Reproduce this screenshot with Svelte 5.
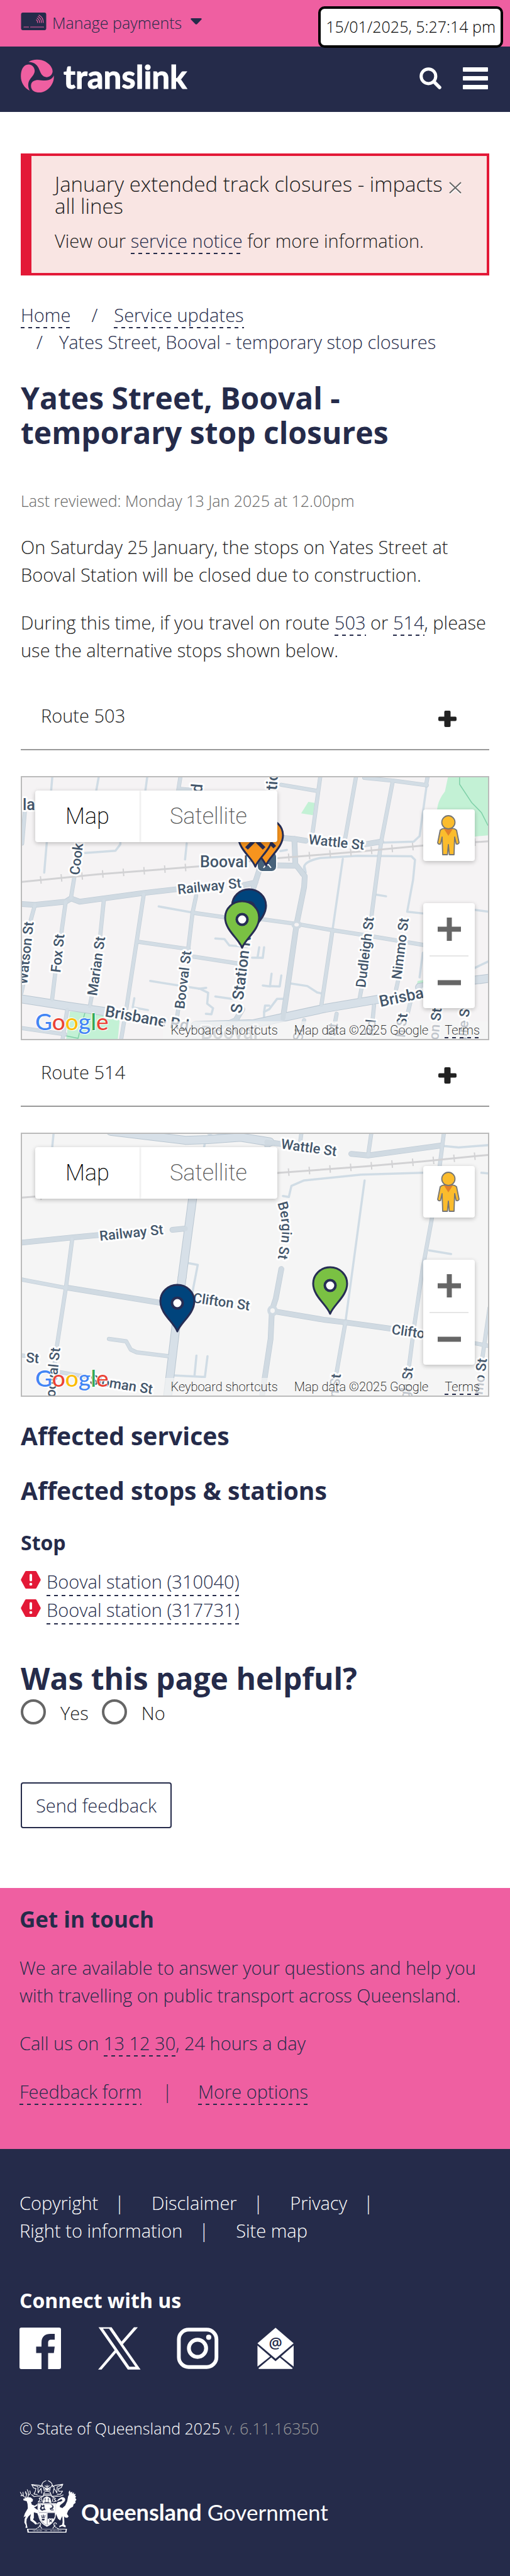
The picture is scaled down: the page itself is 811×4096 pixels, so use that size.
<script>
  const maps = [
    {
      id: 'm503',
      route: 'Route 503',
      land: '#f5f3f4',
      project: 'translate(-35 -16.5) scale(.5172 .2896)',
      parks: [
        'M1378 50L1505 50V375L1460 382L1345 275Q1338 200 1368 135Z',
        'M948 192L968 198L962 265L926 255Z',
        'M215 1342L370 1350L362 1500H203Z',
        'M1284 1175L1305 1170V1200L1282 1195Z'
      ],
      paths: ['M1413 50V95L1450 195L1480 250L1500 320', 'M262 1345L250 1420L240 1490L200 1475'],
      rail: 'M60 632L300 590L620 545L860 500L1100 465L1300 432L1505 408',
      thin: [
        'M161 50L136 580', 'M304 50L296 130', 'M453 50L447 130', 'M262 472L355 460L370 425V400', 'M574 420L569 508',
        'M488 766L600 802', 'M1054 505L1022 900', 'M1315 60L1290 380L1272 410L1180 415',
        'M935 560Q930 520 985 500L1100 488L1265 490L1276 510L1270 620L1252 795L1305 805',
        'M1153 700L1187 710', 'M662 942L690 945L705 980L760 988', 'M797 990L792 1045', 'M812 990L808 1048L775 1047',
        'M462 1175L615 1218L640 1240L637 1300L655 1325L650 1358L633 1355', 'M612 1218L634 1213',
        'M835 1135L830 1205L808 1200', 'M865 1145L860 1205L830 1203', 'M662 1260L720 1275',
        'M413 1270L408 1320L455 1335', 'M890 1188L945 1203L975 1238L990 1244', 'M875 1273H852L828 1330L812 1345V1390',
        'M828 1310H815L812 1345', 'M1505 1065L1440 1120', 'M1300 1020L1290 1155', 'M862 462L882 456', 'M1460 785L1505 795',
        'M936 545L940 580L925 590'
      ],
      mid: [
        'M555 50L548 130', 'M550 120L600 128', 'M985 50L960 375', 'M1095 50L1060 405', 'M1208 75L1172 410L1142 820', 'M1315 50L1310 100',
        'M1120 60L1208 75L1312 100', 'M865 98L977 132', 'M77 230L68 420', 'M229 600L218 720', 'M107 760L90 870',
        'M202 740L188 920', 'M319 735L308 930', 'M442 700L420 960L390 1310L372 1500', 'M603 708L592 800L578 1010',
        'M592 800L700 828', 'M800 835L912 862L1025 897L1110 920L1305 978', 'M425 960L580 1000', 'M590 1040L735 1080',
        'M1022 900L988 1310', 'M170 1130L160 1280', 'M283 1250L276 1315', 'M548 1330L542 1400', 'M1112 1210L1106 1270',
        'M1225 1165L1218 1220', 'M60 1432L200 1468', 'M207 1330L192 1500', 'M1150 1310L1145 1400', 'M1035 1355L1020 1500',
        'M935 1390L920 1500', 'M1262 1290L1250 1380', 'M72 1190L66 1240'
      ],
      wide: [
        'M60 752L107 757L202 740L218 722L245 740L442 692L540 672', 'M750 648L785 635', 'M800 550L780 660',
        'M872 390L905 395L940 405', 'M905 395L908 530', 'M850 540L912 542L937 600L935 660L912 862L885 1200L870 1380',
        'M1120 425L1172 410', 'M745 1330L725 1390L700 1410'
      ],
      arterial: ['M60 1272L215 1315L330 1345', 'M600 1420L780 1410L1000 1325L1180 1270', 'M1290 1210L1505 1160'],
      spot: [912, 866],
      labels: [
        { t: 'Wattle St', x: 455, y: 106, r: 6 },
        { t: 'Railway St', x: 248, y: 186, r: -6 },
        { t: 'Booval', x: 283, y: 143, r: 0, s: 25 },
        { t: 'Cook', x: 91, y: 156, r: -83 },
        { t: 'S Station Rd', x: 349, y: 376, r: -83, s: 25 },
        { t: 'tion', x: 405, y: 21, r: -85, s: 25 },
        { t: 'd', x: 286, y: 25, r: -85, s: 25 },
        { t: 'Booval St', x: 258, y: 369, r: -83 },
        { t: 'Marian St', x: 119, y: 348, r: -82 },
        { t: 'Fox St', x: 61, y: 311, r: -84 },
        { t: 'Watson St', x: 8, y: 330, r: -84 },
        { t: 'Dudleigh St', x: 546, y: 335, r: -83 },
        { t: 'Nimmo St', x: 603, y: 322, r: -83 },
        { t: 'Brisbane Rd', x: 131, y: 380, r: 10, s: 25 },
        { t: 'Brisbane Rd', x: 570, y: 365, r: -12, s: 25 },
        { t: 'Booval', x: 284, y: 416, r: 0, s: 30, f: '#8a939d' },
        { t: 'la', x: 1, y: 52, r: 0, s: 25 },
        { t: 'on St', x: 662, y: 418, r: -84 },
        { t: 'Claire St', x: 704, y: 444, r: -84 },
        { t: 'h St', x: 609, y: 414, r: -84 },
        { t: 'Rd', x: 560, y: 412, r: -84 },
        { t: 'St', x: 500, y: 412, r: -84 },
        { t: 'St', x: 446, y: 420, r: -84 }
      ],
      station: true,
      pins: [
        { x: 388, y: 141, c: '#f7941e', cross: true },
        { x: 371, y: 143, c: '#f7941e', cross: true },
        { x: 361, y: 253, c: '#00447c' },
        { x: 350, y: 272, c: '#7ac143' }
      ]
    },
    {
      id: 'm514',
      route: 'Route 514',
      land: '#f5f5f5',
      project: 'translate(-35 -149.5) scale(.5172 .3774)',
      parks: [],
      paths: [],
      rail: 'M60 665L300 640L860 560L1120 533L1300 512L1505 484',
      thin: [
        'M165 390L160 460', 'M630 435L627 455', 'M1121 592L1062 1190', 'M577 940L608 948L590 1075', 'M604 1330L598 1415',
        'M638 1333L630 1420L515 1412', 'M1320 887L1387 902', 'M870 658L888 662L896 615L935 592L1110 568L1300 560',
        'M1365 447L1410 453L1505 443', 'M1480 560L1505 563', 'M640 395L655 405L690 395'
      ],
      mid: [
        'M222 840L203 1040L175 1290', 'M60 1008L203 1045', 'M335 1260L388 1270L402 1305L420 1316L515 1332',
        'M927 390L922 440', 'M1142 390L1132 485', 'M1365 390L1352 530', 'M1328 750L1300 960L1272 1220L1258 1370',
        'M1062 1190L1035 1400', 'M1505 1130L1480 1370', 'M1460 1278L1505 1290', 'M60 1328L80 1332', 'M185 1400L260 1418', 'M170 1345L165 1390',
        'M1020 1490L1030 1440'
      ],
      wide: [
        'M60 855L225 832L320 820', 'M530 800L570 795', 'M203 1043L490 1107', 'M865 965L848 1090L836 1140L832 1260L805 1505',
        'M840 1143L1000 1180L1062 1190L1210 1218', 'M822 435V460', 'M820 430L870 440', 'M1080 480L1132 487L1355 445'
      ],
      arterial: ['M340 385L570 423L640 420L740 410L830 430', 'M592 670L560 1000', 'M560 1000L545 1160L515 1505'],
      spot: [838, 1141],
      curve: 'Bergin St',
      labels: [
        { t: 'Wattle St', x: 411, y: 23, r: 8 },
        { t: 'Railway St', x: 124, y: 170, r: -6 },
        { t: 'Clifton St', x: 271, y: 268, r: 8 },
        { t: 'Clifton St', x: 587, y: 318, r: 8 },
        { t: 'St', x: 6, y: 363, r: 4 },
        { t: 'Booval St', x: 51, y: 433, r: -84 },
        { t: 'Sloman St', x: 107, y: 398, r: 9 },
        { t: 'an St', x: 501, y: 432, r: -83 },
        { t: 'leigh St', x: 613, y: 445, r: -83 },
        { t: 'mmo St', x: 730, y: 434, r: -83 }
      ],
      station: false,
      pins: [
        { x: 490, y: 287, c: '#7ac143' },
        { x: 247, y: 315, c: '#00447c' }
      ]
    }
  ];
  const stops = ['Booval station (310040)', 'Booval station (317731)'];
  const legal = ['Copyright', 'Disclaimer', 'Privacy', 'Right to information', 'Site map'];
  const google = [['G', '#4285f4'], ['o', '#ea4335'], ['o', '#fbbc05'], ['g', '#4285f4'], ['l', '#34a853'], ['e', '#ea4335']];
</script>

<div class="page">
  <div class="topbar">
    <button class="payments" type="button">
      <svg class="card" viewBox="0 0 40 28" aria-hidden="true">
        <rect width="40" height="28" rx="3" fill="#252b4a" />
        <g fill="none" stroke="#ef5fa1" stroke-width="1.2" stroke-linecap="round">
          <path d="M4.5 23H12M15 23H36" />
          <path d="M24.5 11.5Q26.5 13 26.3 16M25.5 8.8Q29.5 11 29.3 16M27 6.3Q32.6 9.5 32.3 16M28.5 4Q35.6 8 35.3 16" />
        </g>
      </svg>
      <span>Manage payments</span>
      <svg class="caret" viewBox="0 0 18 10" aria-hidden="true"><path d="M1.5 0H16.5Q18.5 .5 17.4 2L10.4 9.2Q9 10.4 7.6 9.2L.6 2Q-.5 .5 1.5 0Z" fill="#252b4a" /></svg>
    </button>
    <div class="clock">15/01/2025, 5:27:14 pm</div>
  </div>

  <header class="nav">
    <a class="brand" href="#home">
      <svg viewBox="20 288 240 238" aria-hidden="true" fill="#ef5fa1">
        <path d="M78 308C108 287 160 286 195 305C230 325 250 355 246 380C240 407 215 418 195 413C165 405 160 375 148 350C135 324 112 308 78 308Z" />
        <path d="M86 509C48 490 24 452 24 408C24 365 40 325 78 325C105 325 122 350 121 372C119 400 95 415 82 440C72 460 74 488 86 509Z" />
        <path d="M255 402C259 440 240 480 205 505C175 525 140 527 115 513C95 500 91 475 98 458C106 440 125 434 145 434C175 436 215 445 240 424C250 415 253 410 255 402Z" />
      </svg>
      <span>translink</span>
    </a>
    <div class="tools">
      <button type="button" aria-label="Search">
        <svg width="35" height="35" viewBox="0 0 35 35"><circle cx="14.3" cy="14.3" r="11.6" fill="none" stroke="#fff" stroke-width="5" /><path d="M23.5 23.5L32 32" stroke="#fff" stroke-width="5.5" stroke-linecap="round" /></svg>
      </button>
      <button type="button" aria-label="Menu">
        <svg width="40" height="35" viewBox="0 0 40 35" fill="#fff"><rect width="40" height="7" rx="1" /><rect y="14" width="40" height="7" rx="1" /><rect y="28" width="40" height="7" rx="1" /></svg>
      </button>
    </div>
  </header>

  <main>
    <section class="alert">
      <div class="alert-head">
        <h2>January extended track closures - impacts all lines</h2>
        <button type="button" aria-label="Close">
          <svg width="20" height="20" viewBox="0 0 20 20"><path d="M1 3L19 20M19 3L1 20" stroke="#fff" stroke-width="2" /><path d="M1 1L19 18M19 1L1 18" stroke="#666" stroke-width="2" /></svg>
        </button>
      </div>
      <p>View our <a href="#notice">service notice</a> for more information.</p>
    </section>

    <ol class="crumbs">
      <li><a href="#home">Home</a></li>
      <li><a href="#updates">Service updates</a></li>
      <li>Yates Street, Booval - temporary stop closures</li>
    </ol>

    <h1>Yates Street, Booval - temporary stop closures</h1>
    <p class="reviewed">Last reviewed: Monday 13 Jan 2025 at 12.00pm</p>
    <p class="copy">On Saturday 25 January, the stops on Yates Street at Booval Station will be closed due to construction.</p>
    <p class="copy">During this time, if you travel on route <a href="#503">503</a> or <a href="#514">514</a>, please use the alternative stops shown below.</p>

    <div class="routes">
      {#each maps as m}
        <button class="route" type="button">
          <span>{m.route}</span>
          <svg width="29" height="26" viewBox="0 0 29 26" fill="#222"><rect x="9.5" width="10" height="26" rx="2" /><rect y="9.5" width="29" height="7" rx="2" /></svg>
        </button>
        <div class="map">
          <svg class="canvas" viewBox="0 0 741 416" preserveAspectRatio="xMidYMid slice" aria-hidden="true">
            <rect width="741" height="416" fill={m.land} />
            <g class="geo" transform={m.project}>
              {#each m.parks as d}<path {d} fill="#c3f1d5" stroke="none" />{/each}
              {#each m.paths as d}<path {d} stroke="#7fd0a8" stroke-width="1.5" />{/each}
              {#each m.thin as d}<path {d} stroke="#d0dce5" stroke-width="3.5" />{/each}
              {#each m.mid as d}<path {d} stroke="#c4cfd8" stroke-width="6.5" />{/each}
              {#each m.wide as d}<path {d} stroke="#c0ccd6" stroke-width="9" />{/each}
              {#each m.arterial as d}<path {d} stroke="#b9c6d1" stroke-width="14" />{/each}
              {#each m.arterial as d}<path {d} stroke="#d7e0e8" stroke-width="12" />{/each}
              {#each m.wide as d}<path {d} stroke="#d0dae2" stroke-width="7.5" />{/each}
              {#each m.mid as d}<path {d} stroke="#d3dde5" stroke-width="5" />{/each}
              <path d={m.rail} stroke="#d2d2d4" stroke-width="3" stroke-linecap="butt" />
              <path class="ties" d={m.rail} stroke="#d2d2d4" stroke-width="12" stroke-dasharray="2 31" />
            </g>
            <g transform={m.project}>
              <ellipse cx={m.spot[0]} cy={m.spot[1]} rx="16" ry="24" fill="#d0dae2" />
              <ellipse cx={m.spot[0]} cy={m.spot[1]} rx="7" ry="10" fill={m.land} />
            </g>
            {#if m.station}
              <rect x="374" y="118" width="31" height="32" rx="8" fill="#47627a" stroke="#fff" stroke-width="2" />
              <path d="M384 144l4-5h4l4 5" fill="none" stroke="#fff" stroke-width="2" />
            {/if}
            <g class="labels">
              {#each m.labels as l}
                <text transform="translate({l.x} {l.y}) rotate({l.r})" font-size={l.s ?? 22} fill={l.f ?? '#43566b'}>{l.t}</text>
              {/each}
              {#if m.curve}
                <path id="bend" d="M406 110Q419 150 409 184L404 216" fill="none" />
                <text font-size="22" fill="#43566b"><textPath href="#bend">{m.curve}</textPath></text>
              {/if}
            </g>
            {#each m.pins as p}
              <g transform="translate({p.x} {p.y})" stroke="#262d54">
                <path d="M0-1C-5-15-27-29-27-49A27 26 0 0 1 27-49C27-29 5-15 0-1Z" fill={p.c} stroke-width="3" stroke-linejoin="round" />
                {#if p.cross}
                  <path d="M-14-30L14-58M14-30L-14-58" stroke-width="6" />
                {:else}
                  <circle cy="-46" r="8.5" fill="#fff" stroke-width="4" />
                {/if}
              </g>
            {/each}
          </svg>
          <div class="types">
            <button type="button" class="on">Map</button>
            <button type="button">Satellite</button>
          </div>
          <button class="pegman" type="button" aria-label="Street View">
            <svg width="82" height="82" viewBox="0 0 82 82">
              <path d="M30 31Q40 28 50 31L53 33L57 53Q56 56 52.5 55L50 44L49 72H41.5L40 56L38.5 72H31L30 44L27.5 55Q24 56 23 53L27 33Z" fill="#fbbc2d" stroke="#757575" stroke-width="1.8" stroke-linejoin="round" />
              <path d="M33 31H47L40 42Z" fill="#e2802b" />
              <circle cx="40" cy="20.5" r="10.5" fill="#fbbc2d" stroke="#757575" stroke-width="1.8" />
            </svg>
          </button>
          <div class="zoom">
            <button type="button" aria-label="Zoom in"><svg width="37" height="37" viewBox="0 0 37 37"><path d="M18.5 0V37M0 18.5H37" stroke="#666" stroke-width="8" /></svg></button>
            <button type="button" aria-label="Zoom out"><svg width="37" height="37" viewBox="0 0 37 37"><path d="M0 18.5H37" stroke="#666" stroke-width="8" /></svg></button>
          </div>
          <div class="google">{#each google as [c, color]}<span style="color:{color}">{c}</span>{/each}</div>
          <div class="credits">
            <button type="button">Keyboard shortcuts</button>
            <span>Map data ©2025 Google</span>
            <span><a href="#terms">Terms</a></span>
          </div>
        </div>
      {/each}
    </div>

    <h2 class="services">Affected services</h2>
    <h2 class="stations">Affected stops &amp; stations</h2>
    <h3>Stop</h3>
    <ul class="stops">
      {#each stops as s}
        <li>
          <svg width="32" height="28" viewBox="0 0 32 28"><path d="M8.5 0H23.5Q24.5 0 25 1L31.5 13Q32 14 31.5 15L25 27Q24.5 28 23.5 28H8.5Q7.5 28 7 27L.5 15Q0 14 .5 13L7 1Q7.5 0 8.5 0Z" fill="#e31937" /><rect x="14" y="4.5" width="4" height="12" rx="2" fill="#fff" /><circle cx="16" cy="21" r="2.3" fill="#fff" /></svg>
          <a href="#stop">{s}</a>
        </li>
      {/each}
    </ul>

    <form class="helpful">
      <h2 id="helpful">Was this page helpful?</h2>
      <div class="choices" role="radiogroup" aria-labelledby="helpful">
        <label><input type="radio" name="helpful" /><span>Yes</span></label>
        <label><input type="radio" name="helpful" /><span>No</span></label>
      </div>
      <button class="send" type="button">Send feedback</button>
    </form>
  </main>

  <section class="contact">
    <h2>Get in touch</h2>
    <p>We are available to answer your questions and help you with travelling on public transport across Queensland.</p>
    <p>Call us on <a href="#call">13 12 30</a>, 24 hours a day</p>
    <ul>
      <li><a href="#feedback">Feedback form</a></li>
      <li><a href="#more">More options</a></li>
    </ul>
  </section>

  <footer>
    <ul class="legal">
      {#each legal as l}<li><a href="#legal">{l}</a></li>{/each}
    </ul>
    <h2>Connect with us</h2>
    <div class="social">
      <a href="#facebook" aria-label="Facebook"><svg viewBox="0 -1 68 68"><path fill-rule="evenodd" fill="#fff" d="M3 0H63Q66 0 66 3V63Q66 66 63 66H45.5V40.4H54.6L56 30.3H45.5V25C45.5 21 46.5 19.3 51 19.3H56V10H49C41 10 35 14 35 24V30.3H26.5V40.4H35V66H3Q0 66 0 63V3Q0 0 3 0Z" /></svg></a>
      <a href="#x" aria-label="X"><svg viewBox="43 46 296 298"><path fill-rule="evenodd" fill="#fff" d="M45 48H136L205 148L292 48H319L215 166L338 343H249L167 226L66 343H42L157 208ZM76 58L260 323H302L118 58Z" /></svg></a>
      <a href="#instagram" aria-label="Instagram"><svg viewBox="598 46 296 298"><rect x="612" y="65" width="262" height="260" rx="68" fill="none" stroke="#fff" stroke-width="26" /><circle cx="742" cy="195" r="60" fill="none" stroke="#fff" stroke-width="27" /><circle cx="820" cy="118" r="18" fill="#fff" /></svg></a>
      <a href="#email" aria-label="Email"><svg viewBox="1140 46 296 298"><g fill="#fff"><path d="M1280 52L1406 160L1280 267L1154 160Z" /><path d="M1154 175L1242 252L1154 322Z" /><path d="M1406 175L1318 252L1406 322Z" /><path d="M1250 258L1280 285L1310 258L1400 334L1394 339H1166L1160 334Z" /></g><text x="1280" y="193" text-anchor="middle" font-family="Open Sans, sans-serif" font-weight="600" font-size="104" fill="#252b4a">@</text></svg></a>
    </div>
    <p class="rights">© State of Queensland 2025 <span>v. 6.11.16350</span></p>
    <div class="gov">
      <svg viewBox="22 36 398 370" aria-hidden="true">
        <g fill="#fff">
          <path d="M48 168L76 156L100 158L116 172L113 186L102 190L108 208L128 215L146 203V214L132 224L122 226L150 246V254L158 262L155 290L146 268L122 262V300L116 312L136 328L146 342L132 346L120 334L98 318L96 298L102 274L84 290L72 310L70 330L74 352L78 370H64L66 352L56 332L58 306L66 290L56 292L50 298L60 268L80 234L78 204L72 184L50 178Z" />
          <path d="M372 108L376 124L390 118L388 132L400 122L400 136L412 132L408 148L416 150L410 162L418 174L410 184L412 196L398 206L394 222L376 232L360 250L352 272L364 290L354 300L340 298L332 290L334 330L333 346L344 356L342 366L318 358L298 366L300 354L318 348L322 330L320 288L312 302L306 318L290 306L276 272L270 262L276 246L276 206L288 190L312 186L322 176L312 170L290 182L282 182L294 168L314 156Q336 154 340 172Q340 186 322 198L304 212L302 224L320 232L340 214L354 184L360 150L366 140L364 120Z" />
          <path fill-rule="evenodd" d="M148 198H278V262L272 300Q256 344 213 362Q170 344 156 300L148 262ZM154 204V260H272V204ZM211 266H158V290Q174 336 211 352ZM217 266V352Q250 336 268 290V266Z" />
          <path d="M154 204H272V260H154ZM158 267H210V350Q174 332 158 290Z" />
          <path d="M218 308Q240 296 264 308Q250 336 218 350Z" />
          <path d="M182 196L190 162L212 150L236 162L244 196H234L224 190H200L192 196Z" />
          <path d="M74 376H136L148 366L140 378H288L280 366L296 376H352L348 402H78ZM84 381L87 397H341L344 381Z" fill-rule="evenodd" />
        </g>
        <g fill="#252b4a">
          <path d="M170 206q4 16 -6 28q2 14 18 16q16-4 16-16q-6-6-2-20q-8-10-12 2q-8-2-14-10zM178 222q10 2 14 12q-8 8-16 2z" fill-rule="evenodd" />
          <circle cx="186" cy="228" r="5" fill="#fff" /><circle cx="198" cy="242" r="5" />
          <path d="M228 210q20-6 22 12q-4 10-16 8q-4 12 8 18h18q-2-10-8-12q12-8 4-22q-10-10-28-4z" opacity=".9" />
          <circle cx="240" cy="222" r="4" fill="#fff" /><circle cx="248" cy="242" r="4" fill="#fff" />
          <path d="M172 278l6 6v10h6v-16h6v16h6v-10l6-6-4 22h-22zM176 306h22l-4 12h-14z" />
          <path d="M232 304l6-28 4-6 6 8 4 26z" />
          <path d="M229 312l18 18M247 312l-18 18" stroke="#252b4a" stroke-width="5" />
          <path d="M201 162v28M195 171h12M223 162v28M217 171h12" stroke="#252b4a" stroke-width="3" />
        </g>
        <g fill="none" stroke="#fff" stroke-width="5" stroke-linecap="round" stroke-linejoin="round">
          <path d="M66 158Q40 150 28 122M42 144L32 146M50 150L46 122M66 156Q76 140 64 116M80 156Q92 134 76 104M84 144L98 130L94 112M74 134L62 126" />
          <path d="M206 42Q180 50 178 70L160 88M178 70L190 92L194 112M222 42Q248 54 250 72L264 88M250 72L236 92L232 112" />
          <path d="M200 76L214 88L228 76M194 88L214 100L234 88M196 100H232M214 72V112M202 110L226 94M202 94L226 110" />
          <path d="M194 122Q214 108 236 122L240 134H190ZM188 144H242M192 134L186 148M240 134L246 148" />
          <path d="M180 84L160 74L106 68L120 92L136 96L132 116L122 134L146 138M112 72L150 82L152 126M152 126L172 94L176 128M106 138L124 152L150 148L188 150" />
          <path d="M250 84L270 74L324 66L312 90L292 98L296 116L322 114L306 136L284 136M316 72L284 84L282 126M282 126L262 94L256 128M326 140L304 150L280 148L246 150" />
          <path d="M184 152L158 164L166 172L152 190L172 188M246 152L272 164L264 172L278 184L258 188M172 156L180 186M258 156L250 186" />
          <path d="M150 368Q176 352 168 338Q156 330 148 342M278 368Q256 354 262 338Q274 330 280 342M160 350L176 372M270 350L254 372" />
        </g>
        <path d="M116 389H180M198 389H216M236 389H314" stroke="#fff" stroke-width="8" stroke-dasharray="4 3 6 4 2 4" opacity=".65" />
      </svg>
      <span><b>Queensland</b> Government</span>
    </div>
  </footer>
</div>

<style>
  :global(body) { background: #fff; }
  .page {
    position: relative;
    font-family: 'Open Sans', sans-serif;
    font-weight: 300;
    font-size: 29px;
    line-height: 1.5;
    color: #222;
  }
  h1, h2, h3, p, ul, ol { margin: 0; padding: 0; }
  ul, ol { list-style: none; }
  button { font: inherit; color: inherit; background: none; border: 0; padding: 0; margin: 0; text-align: left; }
  svg { display: block; }
  a {
    color: #252b4a;
    text-decoration: none;
    padding-bottom: 2px;
    background: repeating-linear-gradient(90deg, #252b4a 0 6px, transparent 6px 12px) left bottom / 100% 2px no-repeat;
  }
  h1, h2, h3 { color: #252b4a; font-weight: 700; }

  .topbar { background: #ef5fa1; height: 74px; padding: 0 33px; }
  .payments { display: flex; align-items: flex-start; padding-top: 17px; font-size: 25px; line-height: 38px; color: #252b4a; }
  .card { width: 41px; height: 28px; margin: 3px 9px 0 0; }
  .caret { width: 18px; height: 10px; margin: 12px 0 0 14px; }
  .clock {
    position: absolute; top: 10px; right: 11px;
    border: 4px solid #000; border-radius: 10px; background: #fff; color: #000;
    font-size: 25px; line-height: 40px; padding: 8px 8px 10px;
  }

  .nav { background: #252b4a; height: 104px; display: flex; justify-content: space-between; padding: 0 35px 0 32px; }
  .brand { display: flex; gap: 14px; padding: 20px 0 0; background: none; color: #fff; }
  .brand svg { width: 55px; height: 54px; }
  .brand span { font-family: Lato, sans-serif; font-weight: 700; font-size: 51px; line-height: 56px; -webkit-text-stroke: 1px #fff; }
  .tools { display: flex; gap: 34px; padding-top: 33px; align-items: flex-start; }

  main { padding: 66px 33px 95px; }
  .alert { background: #f9e5e3; border: 4px solid #e31937; border-left-width: 17px; padding: 27px 40px 29px 37px; }
  .alert-head { display: flex; justify-content: space-between; align-items: flex-start; gap: 10px; }
  .alert h2 { color: #222; font-weight: 300; font-size: 33px; line-height: 35px; flex: 1; }
  .alert button { padding-top: 14px; }
  .alert p { margin-top: 16px; }

  .crumbs { display: flex; flex-wrap: wrap; margin-top: 41px; color: #252b4a; column-gap: 8px; }
  .crumbs li + li::before { content: '/'; padding: 0 26px 0 25px; }

  h1 { font-size: 48px; line-height: 55px; margin-top: 39px; max-width: 680px; }
  .reviewed { font-size: 25px; color: #666; margin-top: 63px; }
  .copy { margin-top: 33px; }

  .routes { margin-top: 32px; }
  .route {
    display: flex; justify-content: space-between; width: 100%; box-sizing: border-box;
    height: 106px; padding: 29px 52px 0 32px; border-bottom: 2px solid #999;
  }
  .route svg { margin-top: 14px; }
  .map { position: relative; box-sizing: border-box; height: 420px; margin-top: 41px; border: 2px solid #bbb; overflow: hidden; font-family: Roboto, sans-serif; }
  .canvas { width: 100%; height: 100%; }
  .geo path { fill: none; vector-effect: non-scaling-stroke; stroke-linejoin: round; stroke-linecap: round; }
  .geo path[stroke='none'] { fill: #c3f1d5; }
  .geo .ties { stroke-linecap: butt; }
  .labels text { font-family: Roboto, sans-serif; font-weight: 500; paint-order: stroke; stroke: #fff; stroke-width: 6px; stroke-linejoin: round; }
  .types, .pegman, .zoom { position: absolute; background: #fff; border-radius: 4px; box-shadow: 0 2px 7px rgba(0, 0, 0, 0.24); }
  .types { left: 21px; top: 21px; display: flex; overflow: hidden; }
  .types button { font-size: 36px; font-weight: 200; line-height: 82px; padding: 0 48px; color: #565656; }
  .types .on { color: #000; box-shadow: 0 0 4px rgba(0, 0, 0, 0.2); }
  .pegman { right: 21px; top: 51px; }
  .zoom { right: 21px; top: 200px; width: 82px; height: 167px; }
  .zoom button { display: grid; place-items: center; width: 62px; height: 83px; margin: 0 auto; }
  .zoom button + button { border-top: 2px solid #e6e6e6; height: 84px; }
  .google {
    position: absolute; left: 21px; bottom: 0; font-family: Lato, sans-serif; font-weight: 500; font-size: 37px; line-height: 56px;
    text-shadow: 0 0 2px #fff, 1px 1px 1px #fff, -1px -1px 1px #fff;
  }
  .credits { position: absolute; right: 0; bottom: 0; display: flex; font-size: 20px; font-weight: 200; line-height: 28px; color: #000; }
  .credits > * { padding: 0 13px; background: rgba(245, 245, 245, 0.7); }
  .credits a { color: #000; padding-bottom: 1px; }

  .services { font-size: 39px; line-height: 44px; margin-top: 40px; }
  .stations { font-size: 39px; line-height: 44px; margin-top: 43px; }
  h3 { font-size: 32px; line-height: 36px; margin-top: 43px; }
  .stops { margin-top: 22px; line-height: 43px; }
  .stops li { display: flex; gap: 9px; }
  .stops svg { margin-top: 5px; }

  .helpful h2 { font-size: 48px; line-height: 55px; margin-top: 58px; }
  .choices { display: flex; gap: 21px; margin-top: 6px; }
  label { display: flex; gap: 23px; align-items: flex-start; }
  input { appearance: none; margin: 0; width: 40px; height: 40px; border: 4px solid #666; border-radius: 50%; background: #fff; }
  .send { margin-top: 88px; border: 2px solid #252b4a; border-radius: 4px; padding: 13px 22px; color: #252b4a; }

  .contact { background: #ef5fa1; color: #252b4a; padding: 30px 31px 70px; }
  .contact h2 { font-size: 35px; line-height: 40px; margin-bottom: 35px; }
  .contact p { margin-bottom: 33px; }
  .contact ul { display: flex; }
  .contact li + li::before { content: '|'; padding: 0 41px 0 33px; }

  footer { background: #252b4a; color: #fff; padding: 64px 31px 72px; }
  footer a { color: #fff; background: none; padding: 0; }
  .legal { display: flex; flex-wrap: wrap; }
  .legal li:not(:last-child)::after { content: '|'; padding: 0 43px 0 26px; }
  footer h2 { color: #fff; font-size: 32px; line-height: 40px; margin-top: 70px; }
  .social { display: flex; gap: 57px; margin-top: 22px; }
  .social svg { width: 68px; height: 68px; }
  .rights { font-size: 25px; margin-top: 75px; }
  .rights span { color: #999; }
  .gov { display: flex; gap: 7px; margin-top: 62px; }
  .gov svg { width: 91px; height: 85px; }
  .gov span { font-family: Lato, sans-serif; font-weight: 400; font-size: 35px; line-height: 40px; padding-top: 31px; }
  .gov b { font-size: 36px; font-weight: 700; }
</style>
